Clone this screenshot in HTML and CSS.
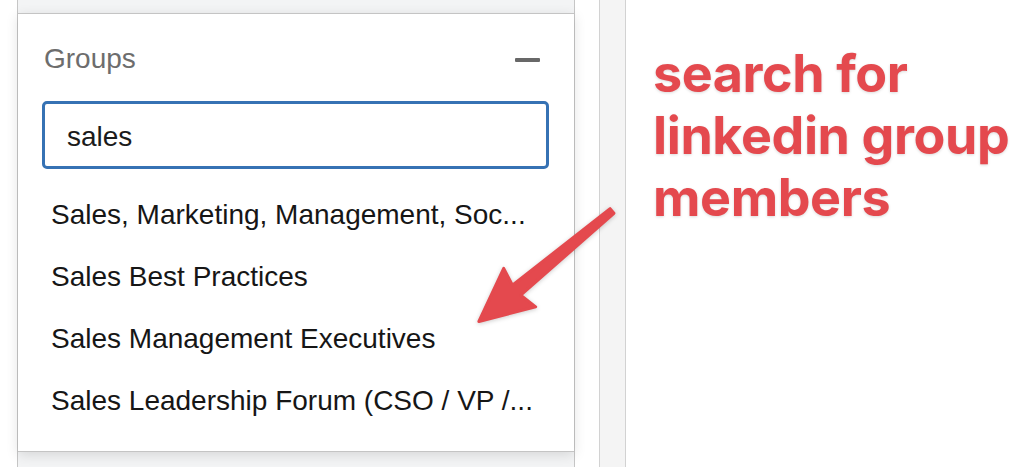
FILE: index.html
```html
<!DOCTYPE html>
<html lang="en">
<head>
    <meta charset="UTF-8">
    <meta name="viewport" content="width=device-width, initial-scale=1.0">
    <title>Groups filter</title>
    <link rel="stylesheet" href="styles.css">
</head>
<body>
    <div class="page">
        <div class="gutter"></div>

        <div class="panel">
            <div class="card">
                <div class="card-head">
                    <span class="card-title">Groups</span>
                    <span class="collapse"></span>
                </div>
                <input class="search" type="text" name="group" value="sales">
                <ul class="results">
                    <li>Sales, Marketing, Management, Soc...</li>
                    <li>Sales Best Practices</li>
                    <li>Sales Management Executives</li>
                    <li>Sales Leadership Forum (CSO / VP /...</li>
                </ul>
            </div>
        </div>

        <div class="spacer"></div>
        <div class="rail"></div>

        <div class="note">search for<br>linkedin group<br>members</div>

        <!-- annotation arrow drawn over the list -->
        <svg class="arrow" width="1024" height="467" viewBox="0 0 1024 467">
            <g transform="translate(612 211) rotate(140.3)">
                <polygon points="0,-3 124,-6.5 120,-25 173,0 120,25 124,6.5 0,3"
                         fill="#e4494e" stroke="#e4494e" stroke-width="3" stroke-linejoin="round"/>
            </g>
        </svg>
    </div>
</body>
</html>
```

FILE: styles.css
```css
* {
    box-sizing: border-box;
}
body {
    margin: 0;
    background: #fff;
    font-family: "Liberation Sans", Arial, sans-serif;
}
.page {
    position: relative;
    display: flex;
    height: 467px;
    overflow: hidden;
}
.gutter {
    width: 17px;
}
.panel {
    width: 558px;
    background-color: #f3f4f5;
    border-left: 1px solid #c6c6c6;
    border-right: 1px solid #c6c6c6;
    padding-top: 13px;
}
.card {
    background: #fff;
    border-top: 1px solid #c4c4c4;
    border-bottom: 1px solid #c4c4c4;
    height: 439px;
    padding: 29px 25px 0 24px;
    box-shadow: 0 3px 12px rgba(0, 0, 0, 0.12);
}
.card-head {
    display: flex;
    justify-content: space-between;
    align-items: center;
    height: 32px;
    padding: 0 9px 0 2px;
}
.card-title {
    font-size: 28px;
    line-height: 32px;
    color: #6d6d6d;
}
.collapse {
    width: 25px;
    height: 4px;
    margin-top: 1px;
    background-color: #686868;
    border-radius: 1px;
}
.search {
    display: block;
    width: 100%;
    height: 68px;
    margin-top: 26px;
    padding: 3px 0 0 22px;
    border: 3px solid #3672b4;
    border-radius: 5px;
    font-family: "Liberation Sans", Arial, sans-serif;
    font-size: 28px;
    color: #1b1b1b;
    outline: none;
}
.results {
    list-style: none;
    margin: 15px 0 0;
    padding: 0;
}
.results li {
    padding-left: 9px;
    font-size: 28px;
    line-height: 62px;
    color: #161616;
    white-space: nowrap;
    overflow: hidden;
}
.spacer {
    width: 24px;
}
.rail {
    width: 27px;
    background-color: #f4f4f4;
    border-left: 1px solid #d2d2d2;
    border-right: 1px solid #d2d2d2;
}
.note {
    flex: 1;
    padding: 43px 0 0 27px;
    font-family: Inter, "Liberation Sans", sans-serif;
    font-weight: 700;
    font-size: 52px;
    line-height: 62px;
    letter-spacing: -0.4px;
    color: #e4494e;
    text-shadow: 0 1px 3px rgba(0, 0, 0, 0.15);
}
.arrow {
    position: absolute;
    top: 0;
    left: 0;
    pointer-events: none;
    filter: drop-shadow(0 1px 2px rgba(0, 0, 0, 0.2));
}
```
